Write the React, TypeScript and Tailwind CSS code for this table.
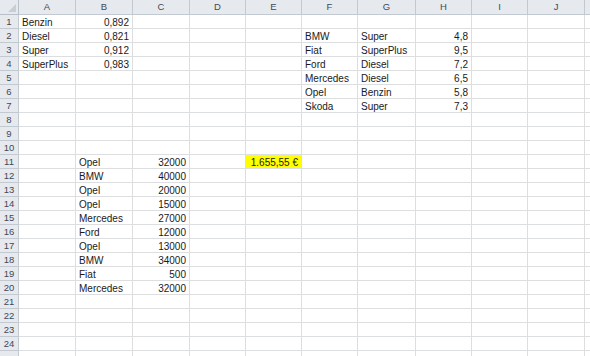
import React from "react";

const COLS = ["A", "B", "C", "D", "E", "F", "G", "H", "I", "J"];

type Cell = { v: string; right?: boolean; hl?: boolean };

// sparse sheet content, keyed by "col+row"
const DATA: Record<string, Cell> = {
  A1: { v: "Benzin" },
  B1: { v: "0,892", right: true },
  A2: { v: "Diesel" },
  B2: { v: "0,821", right: true },
  A3: { v: "Super" },
  B3: { v: "0,912", right: true },
  A4: { v: "SuperPlus" },
  B4: { v: "0,983", right: true },
  F2: { v: "BMW" },
  G2: { v: "Super" },
  H2: { v: "4,8", right: true },
  F3: { v: "Fiat" },
  G3: { v: "SuperPlus" },
  H3: { v: "9,5", right: true },
  F4: { v: "Ford" },
  G4: { v: "Diesel" },
  H4: { v: "7,2", right: true },
  F5: { v: "Mercedes" },
  G5: { v: "Diesel" },
  H5: { v: "6,5", right: true },
  F6: { v: "Opel" },
  G6: { v: "Benzin" },
  H6: { v: "5,8", right: true },
  F7: { v: "Skoda" },
  G7: { v: "Super" },
  H7: { v: "7,3", right: true },
  E11: { v: "1.655,55 €", right: true, hl: true },
};

const cars: [string, string][] = [
  ["Opel", "32000"],
  ["BMW", "40000"],
  ["Opel", "20000"],
  ["Opel", "15000"],
  ["Mercedes", "27000"],
  ["Ford", "12000"],
  ["Opel", "13000"],
  ["BMW", "34000"],
  ["Fiat", "500"],
  ["Mercedes", "32000"],
];
cars.forEach(([name, price], i) => {
  DATA["B" + (11 + i)] = { v: name };
  DATA["C" + (11 + i)] = { v: price, right: true };
});

const ROWS = Array.from({ length: 25 }, (_, i) => i + 1);

export default function App() {
  return (
    <div
      className="w-[590px] h-[356px] overflow-hidden bg-white text-[10px] text-[#1a1a1a]"
      style={{ fontFamily: '"Liberation Sans", Arial, sans-serif' }}
    >
      <div className="grid grid-cols-[19px_57px_57px_57px_56px_56px_56px_58px_56px_56px_57px_1fr] auto-rows-[14px] [grid-template-rows:15px]">
        {/* corner */}
        <div className="relative h-[15px] bg-[#e6e9ee] border-r border-b border-[#b9c0c9]">
          <svg className="absolute right-[2px] bottom-[2px]" width="8" height="8" viewBox="0 0 8 8">
            <polygon points="8,0 8,8 0,8" fill="#c8ced6" />
          </svg>
        </div>
        {COLS.map((c) => (
          <div
            key={c}
            className="h-[15px] flex items-center justify-center bg-[#e6e9ee] border-r border-b border-[#c3c9d1] text-[9.5px] text-[#3f4a59]"
          >
            {c}
          </div>
        ))}
        <div className="h-[15px] bg-[#e6e9ee] border-b border-[#c3c9d1]" />

        {ROWS.map((r) => (
          <React.Fragment key={r}>
            <div className="flex items-center justify-center pt-[1px] bg-[#e6e9ee] border-r border-b border-[#c3c9d1] text-[9.5px] text-[#3f4a59]">
              {r < 25 ? r : ""}
            </div>
            {COLS.map((c) => {
              const cell = DATA[c + r];
              return (
                <div
                  key={c}
                  className={`flex items-center pt-[1px] px-[3px] border-r border-b border-[#dcdee0] whitespace-nowrap ${
                    cell?.right ? "justify-end" : "justify-start"
                  } ${cell?.hl ? "bg-[#ffff00]" : ""}`}
                >
                  {cell?.v}
                </div>
              );
            })}
            <div className="border-b border-[#dcdee0]" />
          </React.Fragment>
        ))}
      </div>
    </div>
  );
}
